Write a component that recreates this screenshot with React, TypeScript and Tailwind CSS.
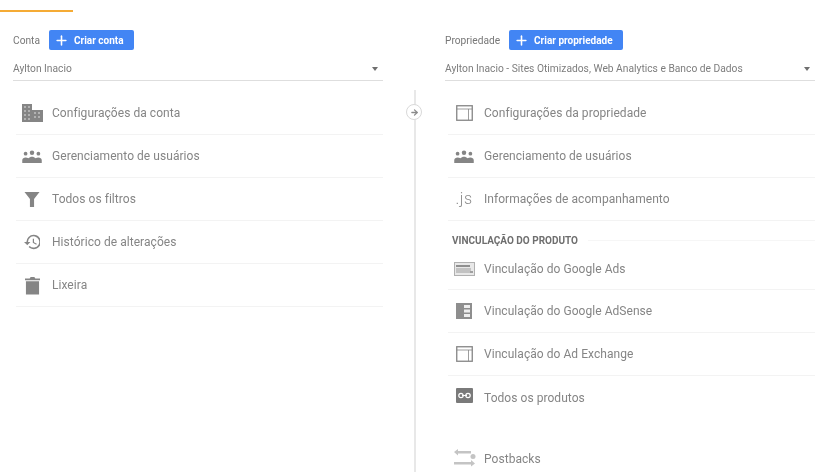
import type { ReactNode } from "react";
import { ArrowRight, Plus } from "lucide-react";

const Svg = ({ w, h, children, box }: { w: number; h: number; box: string; children: ReactNode }) => (
  <svg width={w} height={h} viewBox={box} fill="currentColor">
    {children}
  </svg>
);

const DomainIcon = () => (
  <svg width="21" height="18" viewBox="0 0 21 18">
    <path d="M0 0h10v6h11v12H0z" fill="#858585" />
    <path d="M2 2h2v2H2zm4 0h2v2H6zM2 6h2v2H2zm4 0h2v2H6zm-4 4h2v2H2zm4 0h2v2H6zm-4 4h2v2H2zm4 0h2v2H6zm6-6h2v2h-2zm4 0h2v2h-2zm-4 4h2v2h-2zm4 0h2v2h-2z" fill="#b2b2b2" />
  </svg>
);

const GroupIcon = () => (
  <Svg w={20} h={13} box="0 0 21 14">
    <circle cx="3.600" cy="4" r="2" />
    <circle cx="10.500" cy="3" r="2.400" />
    <circle cx="17.400" cy="4" r="2" />
    <path d="M0 14v-3c0-2 1.800-3 3.600-3 1.200 0 2.200.3 3 1 1-1.200 2.400-1.800 3.900-1.800S13.400 7.800 14.400 9c.8-.7 1.800-1 3-1 1.800 0 3.600 1 3.600 3v3z" />
  </Svg>
);

const FilterIcon = () => (
  <Svg w={16} h={15} box="0 0 16 16">
    <path d="M0 0h16l-5.800 7.400V16H5.800V7.400z" />
  </Svg>
);

const HistoryIcon = () => (
  <Svg w={16} h={16} box="1 3 20 18">
    <path d="M13 3a9 9 0 0 0-9 9H1l3.900 3.900.1.100L9 12H6a7 7 0 1 1 2.100 4.900l-1.400 1.400A9 9 0 1 0 13 3zm-1 5v5l4.300 2.500.7-1.200-3.500-2.100V8z" />
  </Svg>
);

const TrashIcon = () => (
  <Svg w={15} h={19} box="0 0 16 19">
    <path d="M1 5h14v14H1zM0 2h5l1-1.500h4L11 2h5v2H0z" />
  </Svg>
);

const PanelIcon = () => (
  <svg width="17" height="16" viewBox="0 0 17 16" fill="none" stroke="currentColor" strokeWidth="1.300">
    <rect x=".75" y=".75" width="15.500" height="14.500" />
    <path d="M.75 4h15.500M12.500 4v11" strokeWidth=".8" />
  </svg>
);

const AdsIcon = () => (
  <svg width="21" height="14" viewBox="0 0 21 14">
    <rect x=".5" y=".5" width="20" height="13" fill="#e8e8e8" stroke="#b0b0b0" />
    <rect x="2" y="3" width="14" height="2" fill="#8f8f8f" />
    <rect x="2" y="6" width="15" height="5" fill="#c2c2c2" />
    <rect x="16" y="9" width="3" height="2" fill="#9f9f9f" />
  </svg>
);

const AdSenseIcon = () => (
  <svg width="16" height="16" viewBox="0 0 16 16">
    <rect width="16" height="16" fill="#8e8e8e" />
    <path d="M8 2h6v3H8zm0 4.500h6v3H8zM8 11h6v3H8z" fill="#eeeeee" />
  </svg>
);

const AllProductsIcon = () => (
  <svg width="17" height="15" viewBox="0 0 17 15" className="mb-[4px]">
    <rect width="17" height="15" rx="1" fill="#7a7a7a" />
    <circle cx="5" cy="7.500" r="2.200" fill="none" stroke="#fff" strokeWidth="1.200" />
    <circle cx="12" cy="7.500" r="2.200" fill="none" stroke="#fff" strokeWidth="1.200" />
    <path d="M6 7.500h5" stroke="#fff" strokeWidth="1" />
  </svg>
);

const PostbacksIcon = () => (
  <svg width="23" height="22" viewBox="0 0 23 22" fill="#c4c4c4">
    <path d="M1 4l4-3v2h13v2.500H5v2zM22 15.500l-4 3v-2H1V14h17v-2z" />
    <circle cx="20" cy="8.500" r="2.500" />
  </svg>
);

function Row({
  icon,
  label,
  plain,
  h = "h-[43px]",
  pad = "",
}: {
  icon: ReactNode;
  label: string;
  plain?: boolean;
  h?: string;
  pad?: string;
}) {
  return (
    <div className={`flex ${h} ${pad} items-center border-[#f3f3f3] ${plain ? "" : "border-b"}`}>
      <div className="mr-[4px] flex w-[32px] shrink-0 items-center justify-center text-[#858585]">{icon}</div>
      <span className="text-[12px] tracking-[0.05px] text-[#858585]">{label}</span>
    </div>
  );
}

function ColumnHead({ title, button, selected }: { title: string; button: string; selected: string }) {
  return (
    <div>
      <div className="flex h-[20px] items-center gap-[9px]">
        <span className="pt-[1px] text-[10.200px] text-[#777]">{title}</span>
        <button className="flex h-[20px] items-center rounded-[2px] bg-[#4285f4] pl-[5px] pr-[10px] text-[10px] font-bold text-white">
          <Plus className="mr-[5px] h-[15px] w-[15px]" strokeWidth={2.500} />
          {button}
        </button>
      </div>
      <div className="mt-[9px] flex h-[22px] items-center justify-between border-b border-[#dedede] pb-[2px] pr-[5px] text-[10.250px] text-[#7d7d7d]">
        <span>{selected}</span>
        <span className="h-0 w-0 border-x-[3.500px] border-t-[4px] border-x-transparent border-t-[#6f6f6f]" />
      </div>
    </div>
  );
}

export default function App() {
  return (
    <div className="h-[472px] w-[838px] overflow-hidden bg-white font-['Roboto',sans-serif] blur-[0.35px]">
      <div className="mt-[10px] h-[2px] w-[73px] bg-[#f5ab35]" />
      <div className="mt-[18px] flex pl-[13px]">
        <section className="w-[370px]">
          <ColumnHead title="Conta" button="Criar conta" selected="Aylton Inacio" />
          <div className="ml-[3px] mt-[11px]">
            <Row icon={<DomainIcon />} label="Configurações da conta" />
            <Row icon={<GroupIcon />} label="Gerenciamento de usuários" />
            <Row icon={<FilterIcon />} label="Todos os filtros" />
            <Row icon={<HistoryIcon />} label="Histórico de alterações" />
            <Row icon={<TrashIcon />} label="Lixeira" />
          </div>
        </section>

        <div className="relative ml-[31px] mr-[29px] mt-[60px] h-[400px] w-[2px] bg-[#e8e8e8]">
          <div className="absolute left-[-8px] top-[14px] flex h-[16px] w-[16px] items-center justify-center rounded-full border border-[#d9d9d9] bg-white text-[#8a8a8a]">
            <ArrowRight className="h-[9px] w-[9px]" strokeWidth={3.500} />
          </div>
        </div>

        <section className="w-[370px]">
          <ColumnHead
            title="Propriedade"
            button="Criar propriedade"
            selected="Aylton Inacio - Sites Otimizados, Web Analytics e Banco de Dados"
          />
          <div className="ml-[3px] mt-[11px]">
            <Row icon={<PanelIcon />} label="Configurações da propriedade" />
            <Row icon={<GroupIcon />} label="Gerenciamento de usuários" />
            <Row
              icon={<span className="text-[16px] font-light tracking-[0.5px] text-[#8c8c8c]">.js</span>}
              label="Informações de acompanhamento"
            />
            <div className="flex h-[34px] items-center gap-[10px] pl-[4px] pt-[5px]">
              <span className="whitespace-nowrap text-[10px] font-bold text-[#6f6f6f]">VINCULAÇÃO DO PRODUTO</span>
              <span className="h-px flex-1 bg-[#f6f6f6]" />
            </div>
            <Row icon={<AdsIcon />} label="Vinculação do Google Ads" h="h-[35px]" pad="pb-[6px]" />
            <Row icon={<AdSenseIcon />} label="Vinculação do Google AdSense" />
            <Row icon={<PanelIcon />} label="Vinculação do Ad Exchange" />
            <Row icon={<AllProductsIcon />} label="Todos os produtos" plain />
            <div className="h-[18px]" />
            <Row icon={<PostbacksIcon />} label="Postbacks" plain />
          </div>
        </section>
      </div>
    </div>
  );
}
